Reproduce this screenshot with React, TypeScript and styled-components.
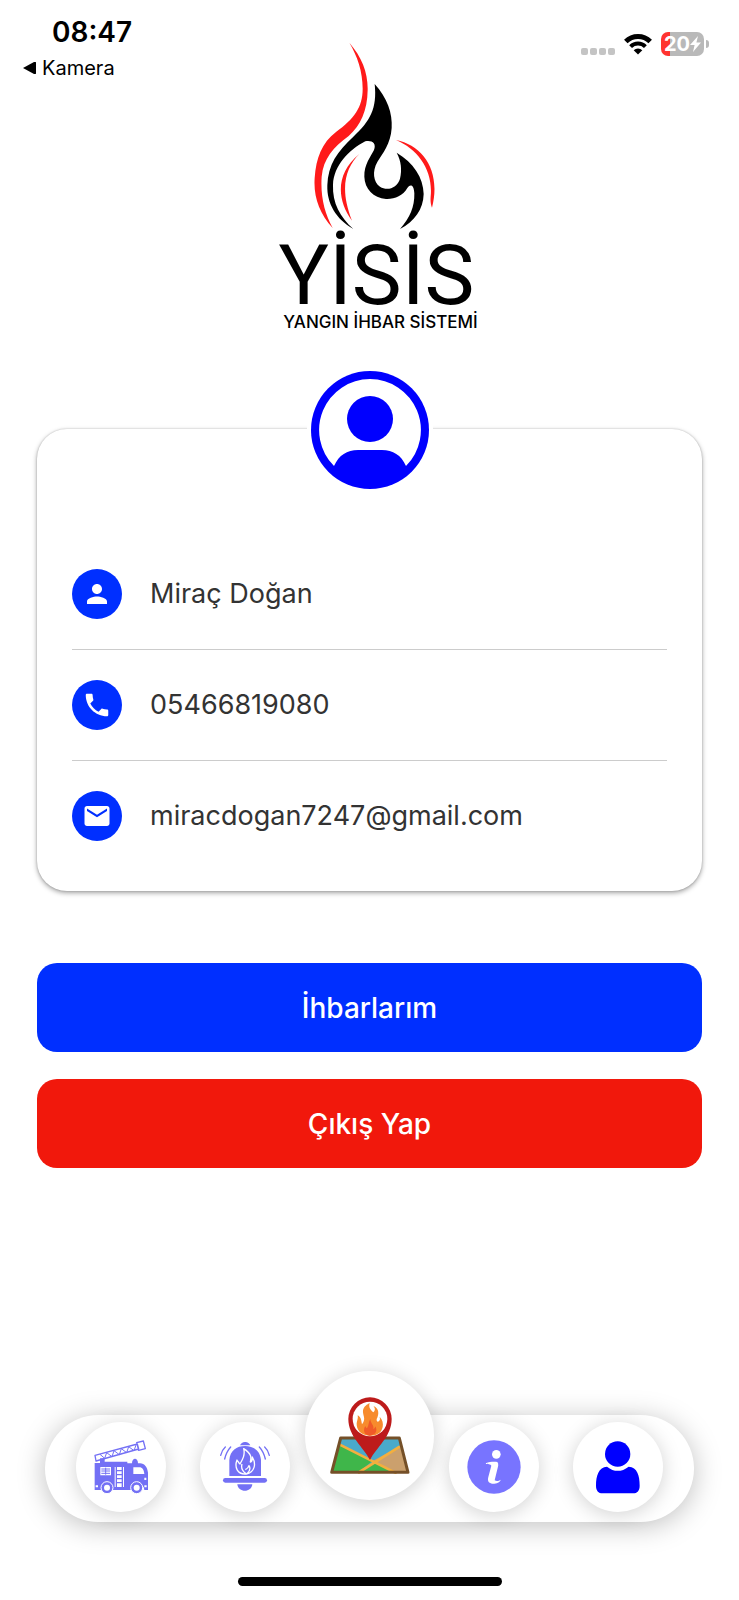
import React from 'react';
import styled, { createGlobalStyle } from 'styled-components';
import { MdPerson, MdPhone, MdEmail } from 'react-icons/md';

const GlobalStyle = createGlobalStyle`
  * { box-sizing: border-box; }
  body {
    margin: 0;
    background: #fff;
    font-family: Inter, "Liberation Sans", sans-serif;
    color: #333;
  }
`;

const Page = styled.div`
  min-height: 100vh;
  display: flex;
  flex-direction: column;
`;

const StatusBar = styled.header`
  display: flex;
  justify-content: space-between;
  align-items: flex-start;
  height: 80px;
  padding: 16px 30px 0 23px;
  color: #000;
`;

const StatusLeft = styled.div`
  display: flex;
  flex-direction: column;
  gap: 4px;
`;

const Clock = styled.time`
  padding-left: 29px;
  font-size: 28px;
  line-height: 32px;
  font-weight: 600;
`;

const BackLink = styled.a`
  display: flex;
  align-items: center;
  gap: 6px;
  font-size: 20px;
  line-height: 32px;
  color: #000;
  text-decoration: none;
`;

const StatusRight = styled.div`
  display: flex;
  align-items: center;
  gap: 9px;
  padding-top: 16px;
`;

const SignalDots = styled.div`
  display: flex;
  gap: 2px;
  padding-top: 14px;
`;

const SignalDot = styled.span`
  width: 7px;
  height: 7px;
  border-radius: 2px;
  background: #c4c4c4;
`;

const Battery = styled.div`
  display: flex;
  align-items: center;
  gap: 2px;
`;

const BatteryBody = styled.div`
  display: flex;
  align-items: center;
  justify-content: center;
  width: 43px;
  height: 24px;
  border-radius: 7px;
  background: linear-gradient(90deg, #ff3430 9px, #b9b9b9 9px);
  color: #fff;
  font-size: 20px;
  line-height: 24px;
  font-weight: 700;
`;

const BatteryTip = styled.span`
  width: 3px;
  height: 8px;
  border-radius: 0 4px 4px 0;
  background: #b9b9b9;
`;

const Main = styled.main`
  display: flex;
  flex-direction: column;
  padding: 0 37px;
`;

const Brand = styled.div`
  display: flex;
  flex-direction: column;
  align-items: center;
  margin-top: -38px;
  color: #000;
`;

const FlameArt = styled.svg`
  margin-left: 12px;
`;

const Wordmark = styled.div`
  margin-top: 9px;
  padding-left: 14px;
  font-family: Roboto, sans-serif;
  font-size: 84px;
  line-height: 74px;
`;

const Tagline = styled.div`
  padding-left: 22px;
  font-size: 17px;
  line-height: 18px;
  font-weight: 500;
  white-space: nowrap;
`;

const AvatarHolder = styled.div`
  display: flex;
  align-self: center;
  padding: 0 4px;
  margin: 40px 0 -60px;
  background: #fff;
  z-index: 1;
`;

const Card = styled.section`
  padding: 110px 35px 20px;
  border-radius: 30px;
  background: #fff;
  box-shadow: 0 0 2px rgba(0, 0, 0, 0.2), 0 2px 5px rgba(0, 0, 0, 0.36);
`;

const InfoList = styled.ul`
  margin: 0;
  padding: 0;
  list-style: none;
`;

const InfoRow = styled.li`
  display: flex;
  align-items: center;
  gap: 28px;
  padding: 30px 0;
  font-size: 27px;
  line-height: 36px;
  & + & { border-top: 1px solid #ccc; }
`;

const InfoIcon = styled.span`
  display: flex;
  align-items: center;
  justify-content: center;
  flex: none;
  width: 50px;
  height: 50px;
  border-radius: 50%;
  background: #002fff;
  color: #fff;
`;

const Actions = styled.div`
  display: flex;
  flex-direction: column;
  gap: 27px;
  margin: 72px 0 40px;
`;

const ActionButton = styled.button<{ $tone: string }>`
  height: 89px;
  border: 0;
  border-radius: 20px;
  background: ${({ $tone }) => $tone};
  color: #fff;
  font-family: inherit;
  font-size: 28px;
  line-height: 36px;
  font-weight: 500;
`;

const TabBar = styled.nav`
  display: grid;
  grid-template-columns: repeat(5, minmax(0, 1fr));
  place-items: center;
  height: 107px;
  margin: auto 45px 0;
  padding: 0 14px 3px;
  border-radius: 54px;
  background: #fff;
  box-shadow: 0 4px 28px rgba(0, 0, 0, 0.25);
`;

const TabButton = styled.button<{ $raised?: boolean }>`
  display: flex;
  align-items: center;
  justify-content: center;
  width: ${({ $raised }) => ($raised ? 129 : 90)}px;
  height: ${({ $raised }) => ($raised ? 129 : 90)}px;
  margin-top: ${({ $raised }) => ($raised ? -64 : 0)}px;
  padding: 0;
  border: 0;
  border-radius: 50%;
  background: #fff;
  box-shadow: 0 3px 20px rgba(0, 0, 0, 0.18);
`;

const HomeIndicator = styled.div`
  align-self: center;
  width: 264px;
  height: 9px;
  margin: 55px 0 14px;
  border-radius: 5px;
  background: #000;
`;

const Flame = () => (
  <FlameArt width="124" height="188" viewBox="132 36 372 564" aria-hidden="true">
    <path fill="#ff1a1a" d="M238 38C276 82 294 128 293 180C292 242 272 286 236 318C190 352 160 386 155 440C151 500 164 550 188 594C148 550 130 500 134 444C138 384 156 338 198 306C252 266 278 232 278 176C278 124 262 78 238 38Z" />
    <path d="M314 162C352 204 368 250 365 294C362 342 338 370 322 396C306 424 310 456 330 470C352 484 382 474 390 446C396 420 394 394 380 368C430 398 460 442 461 492C460 538 434 574 390 597C420 564 434 530 433 490C432 466 422 460 412 474C398 498 374 508 348 507C310 504 284 476 283 440C282 404 302 380 312 360C320 340 306 330 286 334C236 360 192 406 189 464C187 520 210 560 250 597C198 568 170 520 172 466C174 404 202 364 250 320C300 274 322 236 314 162Z" />
    <path fill="#ff1a1a" d="M268 372C226 414 208 476 246 572C200 510 196 430 268 372ZM378 330C460 346 514 424 486 533C482 522 481 514 482 500C490 420 444 358 378 330Z" />
  </FlameArt>
);

const Avatar = () => (
  <svg width="118" height="118" viewBox="0 0 118 118" role="img" aria-label="Profil">
    <circle cx="59" cy="59" r="59" fill="#00f" />
    <path fill="#fff" d="M59 8a51 51 0 0 1 36 87C90 84 82 79 71 79H47C36 79 28 84 23 95A51 51 0 0 1 59 8Z" />
    <circle cx="59" cy="48" r="23" fill="#00f" />
  </svg>
);

const Wifi = () => (
  <svg width="28" height="22" viewBox="0 0 28 22" aria-hidden="true">
    <g fill="none" stroke="#000" strokeWidth="5">
      <path d="M1.8 8.6a17.3 17.3 0 0 1 24.4 0" />
      <path strokeWidth="4" d="M6.6 13.6a10.5 10.5 0 0 1 14.8 0" />
    </g>
    <path d="M14 21.5l-4.3-4.2a6 6 0 0 1 8.6 0z" />
  </svg>
);

const Bolt = () => (
  <svg width="11" height="16" viewBox="0 0 11 16" aria-hidden="true">
    <path fill="#fff" d="M8 0L0 9h4.6L3 16l8-9.6H6.4z" />
  </svg>
);

const FireTruck = () => (
  <svg width="54" height="54" viewBox="0 0 162 162" aria-hidden="true">
    <g fill="none" stroke="#7370f5" strokeWidth="4" strokeLinejoin="round">
      <path d="M3 46L130 12L134 27L6 63ZM128 8L148 3L154 26L134 31Z" />
      <path strokeWidth="3" d="M18 43l14 12 6-17 16 12 6-18 16 12 6-18 16 12 6-18 16 12 6-17" />
    </g>
    <path fill="#7370f5" d="M18 55h14v10h68v5h14c0-18 18-18 18 0h6c14 0 22 12 24 28v52h-11a17 17 0 0 0-34 0H57a17 17 0 0 0-34 0H2V69h16Z" />
    <path fill="#fff" d="M19 81h32v25H19ZM62 81h28v60H62ZM118 82h18c9 0 14 8 15 20h-33ZM5 136h7v6H5ZM151 113h6v7h-6ZM151 136h7v6h-7Z" />
    <g stroke="#7370f5" strokeWidth="3">
      <path d="M22 87h26M22 93h26M22 100h26M35 83v21" />
      <path strokeWidth="4" d="M67 81v60M85 81v60M67 92h18M67 104h18M67 116h18M67 128h18" />
    </g>
    <g fill="#7370f5" stroke="#fff" strokeWidth="3">
      <circle cx="39" cy="143" r="18" />
      <circle cx="128" cy="143" r="18" />
    </g>
    <g fill="#fff">
      <circle cx="39" cy="143" r="9" />
      <circle cx="128" cy="143" r="9" />
    </g>
  </svg>
);

const FireBell = () => (
  <svg width="50" height="50" viewBox="0 0 150 150" aria-hidden="true">
    <g fill="#7370f5">
      <path d="M60 10a17 17 0 0 1 31 0M28 102V54C30 26 50 12 75 12s46 14 48 42v48Z" />
      <rect x="9" y="108" width="132" height="14" rx="7" />
      <path d="M52 127h45c-2 26-43 26-45 0Z" />
    </g>
    <path fill="none" stroke="#fff" strokeWidth="4" strokeLinejoin="round" d="M71 20C96 36 94 48 91 60C98 58 97 51 97 45C110 67 103 91 79 96C51 98 43 75 51 54C55 60 56 63 60 66C68 52 76 38 71 20ZM78 95C68 88 63 76 66 66M81 95C93 84 91 77 87 71C85 78 80 81 76 83" />
    <g fill="none" stroke="#7370f5" strokeWidth="4" strokeLinecap="round">
      <path d="M16 15C8 22 4 32 2 40M32 15C22 26 17 38 14 51M134 15C142 22 146 32 148 40M118 15C128 26 133 38 136 51" />
    </g>
  </svg>
);

const MapPin = () => (
  <svg width="80" height="78" viewBox="0 0 240 234" aria-hidden="true">
    <path fill="#4aaacb" d="M34 126H206L232 230H6Z" />
    <path fill="#3fb64a" d="M28 148L126 196L84 230H6Z" />
    <path fill="#cba06d" d="M212 150L126 196L190 230H234Z" />
    <path fill="#3fb64a" d="M130 198L190 230H82Z" />
    <path fill="none" stroke="#f3af3e" strokeWidth="8" d="M28 145L200 232M84 231L210 151" />
    <path fill="none" stroke="#755028" strokeWidth="9" strokeLinejoin="round" d="M32 126H208L234 229H5Z" />
    <path fill="#bd1b1b" d="M120 192C101 154 55 122 55 69a65 65 0 0 1 130 0C185 122 139 154 120 192Z" />
    <circle cx="120" cy="69" r="52" fill="#fff" />
    <path fill="#f78b2d" d="M120 119C91 119 79 100 80 82C81 73 85 68 83 58C94 64 94 75 96 85C110 68 97 58 99 43C101 31 112 25 119 21C115 35 122 42 130 49C138 42 134 34 130 30C149 37 147 57 140 69C139 78 145 80 149 73C151 69 149 66 149 62C158 71 160 83 158 93C154 111 141 119 120 119Z" />
    <path fill="#f05a28" d="M119 119C102 118 98 101 106 90C108 94 109 96 111 97C117 88 115 78 121 69C121 82 133 87 130 100C134 97 136 94 136 91C144 104 136 118 119 119Z" />
  </svg>
);

const Info = () => (
  <svg width="54" height="54" viewBox="0 0 162 162" aria-hidden="true">
    <circle cx="81" cy="81" r="80" fill="#7874ff" />
    <g fill="#fff">
      <circle cx="88" cy="43" r="13" />
      <path d="M56 70C70 64 84 65 91 66C96 72 93 80 91 88L83 121C90 125 96 122 101 119C99 128 86 132 75 131C64 129 61 122 64 111L73 77C67 70 60 74 56 70Z" />
    </g>
  </svg>
);

const Person = () => (
  <svg width="44" height="53" viewBox="0 0 132 159" aria-hidden="true">
    <g fill="#00f">
      <circle cx="65" cy="39" r="38" />
      <path d="M33 77Q65 102 98 77C124 78 131 104 131 134C131 149 124 157 111 157H20C7 157 0 149 0 134C0 104 8 78 33 77Z" />
    </g>
  </svg>
);

const BackArrow = () => (
  <svg width="13" height="12" viewBox="0 0 13 12" aria-hidden="true">
    <path d="M0 6L11 0q2-1 2 1v10q0 2-2 1z" />
  </svg>
);

const details = [
  { icon: <MdPerson size={30} />, text: 'Miraç Doğan' },
  { icon: <MdPhone size={30} />, text: '05466819080' },
  { icon: <MdEmail size={30} />, text: 'miracdogan7247@gmail.com' },
];

const tabs = [
  { label: 'İtfaiye', icon: <FireTruck /> },
  { label: 'Alarm', icon: <FireBell /> },
  { label: 'Harita', icon: <MapPin />, raised: true },
  { label: 'Bilgi', icon: <Info /> },
  { label: 'Profil', icon: <Person /> },
];

export default function App() {
  return (
    <Page>
      <GlobalStyle />
      <StatusBar>
        <StatusLeft>
          <Clock>08:47</Clock>
          <BackLink href="#"><BackArrow />Kamera</BackLink>
        </StatusLeft>
        <StatusRight>
          <SignalDots>
            <SignalDot /><SignalDot /><SignalDot /><SignalDot />
          </SignalDots>
          <Wifi />
          <Battery>
            <BatteryBody>20<Bolt /></BatteryBody>
            <BatteryTip />
          </Battery>
        </StatusRight>
      </StatusBar>
      <Main>
        <Brand>
          <Flame />
          <Wordmark>YİSİS</Wordmark>
          <Tagline>YANGIN İHBAR SİSTEMİ</Tagline>
        </Brand>
        <AvatarHolder><Avatar /></AvatarHolder>
        <Card>
          <InfoList>
            {details.map(({ icon, text }) => (
              <InfoRow key={text}><InfoIcon>{icon}</InfoIcon>{text}</InfoRow>
            ))}
          </InfoList>
        </Card>
        <Actions>
          <ActionButton $tone="#002fff">İhbarlarım</ActionButton>
          <ActionButton $tone="#f1180c">Çıkış Yap</ActionButton>
        </Actions>
      </Main>
      <TabBar>
        {tabs.map(({ label, icon, raised }) => (
          <TabButton key={label} $raised={raised} aria-label={label}>{icon}</TabButton>
        ))}
      </TabBar>
      <HomeIndicator />
    </Page>
  );
}
